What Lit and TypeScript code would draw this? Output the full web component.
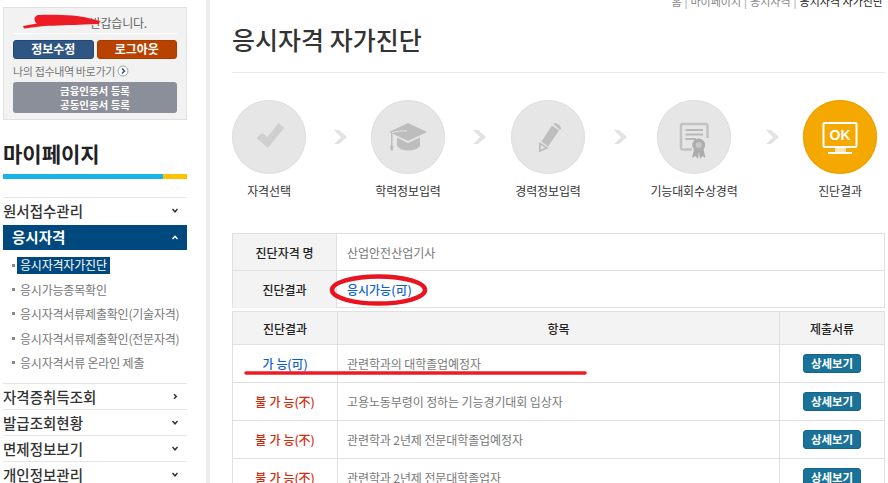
import { LitElement, html, css, svg } from "lit";
import { customElement } from "lit/decorators.js";

const G = "#bdbdbd";
const icons: Record<string, unknown> = {
  check: svg`<path d="M24.500 38 L30 33 L35.500 37 L46.500 23 L52 28 L36 48 Z" fill="#cfcfcf"/>`,
  cap: svg`<g fill="${G}"><path d="M18 32 L37 23 L56 32 L37 41 Z"/><path d="M26 37.500 L37 43 L49 37.500 V46 C45 52 30 52 26 46 Z"/><path d="M20 33 H21.500 V46 H20 Z"/><path d="M19 46 H22.500 L21.800 50.500 H19.800 Z"/></g><path d="M20.500 33 C26 31 31 30.500 36 31" fill="none" stroke="#e6e6e6" stroke-width="1"/>`,
  pen: svg`<g fill="${G}"><path d="M30.500 41.500 L41 25.500 L48 30.500 L37 46.500 Z"/><path d="M42.500 24 L44 23 C46 23 50 26 50 28.500 L49 30 Z"/></g><path d="M29 43.500 L28.800 51 L35.800 47.800 Z" fill="#e6e6e6" stroke="${G}" stroke-width="1.800"/>`,
  cert: svg`<g fill="none" stroke="#c2c2c2" stroke-width="2.500"><path d="M35 49.500 H26 Q24 49.500 24 47.500 V26 Q24 24 26 24 H48.500 Q50.500 24 50.500 26 V38"/></g><path d="M28.500 30 H46 M28.500 34.500 H46 M28.500 39 H39" stroke="#b8b8b8" stroke-width="1.800"/><path d="M37 49 L35 58 L38.500 56 L41 59 L42 52 L43 59 L45.500 56 L48.500 58 L46.500 49 Z" fill="#adadad"/><circle cx="41.700" cy="45" r="6.500" fill="#adadad"/><circle cx="41.700" cy="45" r="3" fill="#c8c8c8"/>`,
  ok: svg`<rect x="20.500" y="23" width="33" height="24" rx="1" fill="none" stroke="#fff" stroke-width="2"/><text x="37" y="39.500" text-anchor="middle" font-family="'Liberation Sans',sans-serif" font-weight="700" font-size="14" fill="#fff">OK</text><path d="M32 48 H43 V52 H32 Z" fill="#fff" opacity=".7"/><path d="M25 52 H49 V54 H25 Z" fill="#fff"/>`,
};

const steps = [
  { label: "자격선택", icon: "check", on: false, before: 0 },
  { label: "학력정보입력", icon: "cap", on: false, before: 27 },
  { label: "경력정보입력", icon: "pen", on: false, before: 27 },
  { label: "기능대회수상경력", icon: "cert", on: false, before: 28 },
  { label: "진단결과", icon: "ok", on: true, before: 34 },
];
const tracks = "74px 65px 74px 66px 74px 72px 74px 72px 74px";

const rows = [
  { ok: true, text: "관련학과의 대학졸업예정자" },
  { ok: false, text: "고용노동부령이 정하는 기능경기대회 입상자" },
  { ok: false, text: "관련학과 2년제 전문대학졸업예정자" },
  { ok: false, text: "관련학과 2년제 전문대학졸업자" },
];

@customElement("app-root")
export class AppRoot extends LitElement {
  static styles = css`
    :host {
      display: block;
      position: relative;
      width: 888px;
      height: 483px;
      overflow: hidden;
      background: #fff;
      font-family: "Noto Sans CJK KR", "Liberation Sans", sans-serif;
      font-size: 12px;
      color: #777;
    }
    * { box-sizing: border-box; }
    .page { display: flex; height: 483px; }
    .side {
      width: 210px;
      flex: none;
      padding: 7px 19px 0 3px;
      border-right: 4px solid #eeeeee;
    }
    .login {
      height: 113px;
      background: #f2f2f2;
      border: 1px solid #e0e0e0;
      padding: 0 9px;
    }
    .hello {
      height: 26px;
      border-bottom: 1px solid #fff;
      text-align: right;
      padding-right: 30px;
      line-height: 30px;
      font-size: 12px;
      color: #666;
      letter-spacing: -0.2px;
    }
    .btns { display: flex; gap: 3px; margin-top: 6px; }
    .btn {
      flex: 1;
      height: 19px;
      border-radius: 3px;
      color: #fff;
      font-weight: 700;
      font-size: 12px;
      line-height: 16px;
      text-align: center;
    }
    .navy { background: #2f5583; border: 1px solid #1f4a78; }
    .rust { background: #b84300; border: 1px solid #a83d00; }
    .jump {
      display: flex;
      align-items: center;
      gap: 2px;
      height: 23px;
      font-size: 11px;
      color: #777;
      letter-spacing: -0.35px;
    }
    .jump svg { width: 12px; height: 12px; }
    .cert {
      height: 31px;
      background: #8a8f99;
      border-radius: 3px;
      color: #fff;
      font-weight: 700;
      font-size: 10.500px;
      line-height: 14px;
      text-align: center;
      padding-top: 1.500px;
    }
    .side h2 {
      margin: 18px 0 0;
      height: 31px;
      line-height: 31px;
      font-size: 21px;
      font-weight: 700;
      color: #222;
    }
    .bar { display: flex; height: 5px; margin: 5px 0 18px; background: #1ab3e8; justify-content: flex-end; }
    .bar i { width: 24px; background: #ffc000; }
    .item {
      display: flex;
      justify-content: space-between;
      align-items: center;
      height: 26px;
      border-top: 1px solid #e6e6e6;
      padding-right: 9px;
      font-size: 14.500px;
      font-weight: 500;
      line-height: 24px;
      color: #333;
    }
    .item svg { width: 6px; height: 5px; flex: none; }
    .item.first { height: 28px; padding-bottom: 2px; }
    .item.active {
      height: 25px;
      background: #00497f;
      color: #fff;
      font-weight: 700;
      border-top: 0;
      padding-left: 9px;
      padding-bottom: 1px;
    }
    .subs { list-style: none; margin: 0; padding: 3px 0 0; height: 133px; }
    .subs li {
      display: flex;
      align-items: center;
      height: 24.400px;
      padding-left: 9px;
      font-size: 12px;
      letter-spacing: -0.2px;
      color: #777;
      white-space: nowrap;
    }
    .subs li::before {
      content: "";
      width: 3px;
      height: 3px;
      background: #888;
      margin-right: 5px;
      flex: none;
    }
    .subs li span { padding: 0 3px 0 0; }
    .subs li.cur span { background: #00497f; color: #fff; height: 17px; line-height: 16px; padding: 0 3px; margin-left: -3px; }
    .main { flex: 1; min-width: 0; padding: 0 3px 0 22px; }
    .crumb {
      height: 7px;
      margin-top: -7px;
      padding-right: 2px;
      line-height: 16px;
      text-align: right;
      font-size: 11px;
      color: #888;
      white-space: nowrap;
    }
    .crumb b { font-weight: 400; color: #222; }
    .crumb u { text-decoration: none; color: #999; margin: 0 3px; }
    h1 {
      margin: 0;
      height: 73px;
      padding-top: 21px;
      line-height: 36px;
      border-bottom: 1px solid #e9e9e9;
      font-size: 25px;
      font-weight: 500;
      color: #333;
    }
    .steps {
      display: grid;
      margin-top: 27px;
      align-items: start;
      height: 133px;
    }
    .step { width: 74px; display: flex; flex-direction: column; align-items: center; }
    .circle {
      width: 74px;
      height: 74px;
      border-radius: 50%;
      background: #e6e6e6;
      box-shadow: inset 0 0 0 1px #e0e0e0;
    }
    .circle.on { background: #f5a800; box-shadow: inset 0 0 0 1px #eba100; }
    .circle svg { display: block; width: 74px; height: 74px; }
    .step span { margin-top: 8px; line-height: 18px; color: #333; white-space: nowrap; letter-spacing: -0.15px; }
    .chev { width: 14px; height: 14px; margin-top: 30px; display: block; }
    .grid { display: grid; border: 1px solid #e0e0e0; color: #777; }
    .info { grid-template-columns: 104px 1fr; grid-auto-rows: 37px; height: 75px; }
    .info > div { border-bottom: 1px solid #e0e0e0; display: flex; align-items: center; padding-left: 10px; }
    .info > div:nth-last-child(-n + 2) { border-bottom: 0; }
    .grid .th {
      background: #f3f3f3;
      color: #222;
      font-weight: 500;
      justify-content: center;
      padding: 0;
      border-right: 1px solid #e0e0e0;
    }
    .blue { color: #0b5fd6; font-weight: 500; }
    .red { color: #d42a0a; font-weight: 500; }
    .list {
      margin-top: 3px;
      grid-template-columns: 105px 442px 1fr;
      grid-template-rows: 33px;
      grid-auto-rows: 38px;
      border-bottom: 0;
    }
    .list > div {
      display: flex;
      align-items: center;
      justify-content: center;
      border-bottom: 1px solid #e0e0e0;
      border-right: 1px solid #e0e0e0;
      height: 38px;
      letter-spacing: -0.1px;
    }
    .list > div:nth-child(3n) { border-right: 0; }
    .list .head { height: 33px; background: #f3f3f3; color: #222; font-weight: 500; }
    .list .txt { justify-content: flex-start; padding-left: 9px; }
    .list .res { word-spacing: 0.5px; }
    .more {
      width: 58px;
      height: 19px;
      border-radius: 3px;
      background: #1a7299;
      border: 1px solid #15658a;
      color: #fff;
      font-weight: 700;
      font-size: 11.500px;
      line-height: 16px;
      text-align: center;
    }
    .ink { position: absolute; left: 0; top: 0; width: 888px; height: 483px; pointer-events: none; }
  `;

  private down() {
    return html`<svg viewBox="0 0 6 5"><path d="M.5 1 L3 3.800 L5.500 1" fill="none" stroke="#333" stroke-width="1.500"/></svg>`;
  }

  render() {
    const subs = ["응시자격자가진단", "응시가능종목확인", "응시자격서류제출확인(기술자격)", "응시자격서류제출확인(전문자격)", "응시자격서류 온라인 제출"];
    return html`
      <div class="page">
        <aside class="side">
          <div class="login">
            <div class="hello">반갑습니다.</div>
            <div class="btns"><div class="btn navy">정보수정</div><div class="btn rust">로그아웃</div></div>
            <div class="jump">나의 접수내역 바로가기
              <svg viewBox="0 0 12 12"><circle cx="6" cy="6" r="5" fill="#fff" stroke="#9aa3ad"/><path d="M5 3.500 L7.500 6 L5 8.500" fill="none" stroke="#3d4f63" stroke-width="1.500"/></svg>
            </div>
            <div class="cert">금융인증서 등록<br />공동인증서 등록</div>
          </div>
          <h2>마이페이지</h2>
          <div class="bar"><i></i></div>
          <div class="item first">원서접수관리 ${this.down()}</div>
          <div class="item active">응시자격
            <svg viewBox="0 0 6 5"><path d="M.5 4 L3 1.200 L5.500 4" fill="none" stroke="#fff" stroke-width="1.400"/></svg>
          </div>
          <ul class="subs">
            ${subs.map((s, i) => html`<li class=${i === 0 ? "cur" : ""}><span>${s}</span></li>`)}
          </ul>
          <div class="item">자격증취득조회
            <svg viewBox="0 0 6 5"><path d="M2 .3 L4.300 2.500 L2 4.700" fill="none" stroke="#333" stroke-width="1.500"/></svg>
          </div>
          <div class="item">발급조회현황 ${this.down()}</div>
          <div class="item">면제정보보기 ${this.down()}</div>
          <div class="item">개인정보관리 ${this.down()}</div>
        </aside>
        <main class="main">
          <div class="crumb">홈<u>|</u>마이페이지<u>|</u>응시자격<u>|</u><b>응시자격 자가진단</b></div>
          <h1>응시자격 자가진단</h1>
          <div class="steps" style="grid-template-columns:${tracks}">
            ${steps.map(
              (s) => html`
                ${s.before
                  ? html`<svg class="chev" style="margin-left:${s.before}px" viewBox="0 0 14 14"><path d="M1 0 H6 L14 7 L6 14 H1 L8 7 Z" fill="#e2e2e2"/></svg>`
                  : ""}
                <div class="step">
                  <div class="circle ${s.on ? "on" : ""}"><svg viewBox="0 0 74 74">${icons[s.icon]}</svg></div>
                  <span>${s.label}</span>
                </div>
              `
            )}
          </div>
          <div class="grid info">
            <div class="th">진단자격 명</div><div>산업안전산업기사</div>
            <div class="th">진단결과</div><div class="blue">응시가능(可)</div>
          </div>
          <div class="grid list">
            <div class="head">진단결과</div><div class="head">항목</div><div class="head">제출서류</div>
            ${rows.map(
              (r) => html`
                <div class="res ${r.ok ? "blue" : "red"}">${r.ok ? "가 능(可)" : "불 가 능(不)"}</div>
                <div class="txt">${r.text}</div>
                <div><div class="more">상세보기</div></div>
              `
            )}
          </div>
        </main>
      </div>
      <svg class="ink" viewBox="0 0 888 483">
        <path d="M38 15 C52 14 80 15 88 18 L100 21 L99 24 L84 24.500 C72 25 56 25.500 44 26 L24 28.500 L23 26 L37 23.500 C33 21 34 16 38 15 Z" fill="#ed1c24"/>
        <ellipse cx="378.500" cy="290" rx="46.500" ry="13.500" fill="none" stroke="#e8141f" stroke-width="4.500"/>
        <path d="M246 373 H585" stroke="#ed1c24" stroke-width="3.500" stroke-linecap="round"/>
      </svg>
    `;
  }
}
